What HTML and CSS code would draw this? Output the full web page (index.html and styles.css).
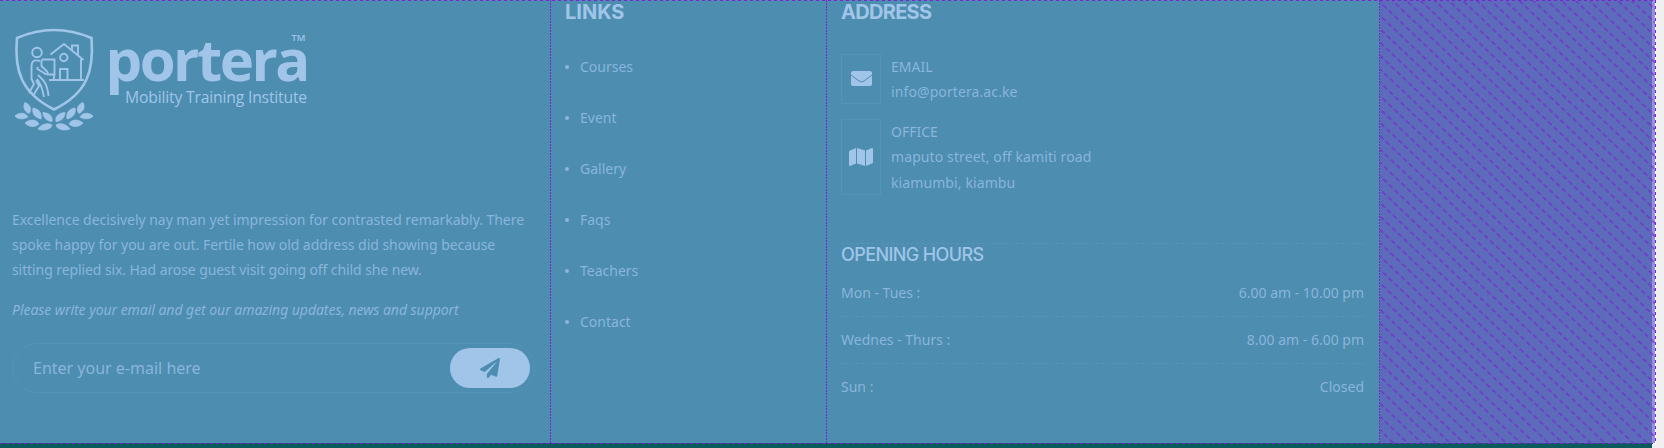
FILE: index.html
```html
<!DOCTYPE html>
<html lang="en">
<head>
<meta charset="utf-8">
<title>Portera Mobility Training Institute</title>
<link rel="stylesheet" href="styles.css">
</head>
<body>
<footer class="footer">
  <div class="grid">
    <section class="about">
      <svg class="logo" width="340" height="150" viewBox="0 0 340 150">
        <g fill="none" stroke="#a0c5e9" stroke-width="2.600">
          <path d="M17 38Q54 22 91.500 38C94 70 88 93 54 109.500C21 93 14 70 17 38Z"/>
          <g stroke-width="1.900">
            <circle cx="37" cy="52.500" r="4.800"/>
            <circle cx="63.800" cy="57.500" r="3.700"/>
            <path d="M50.500 54.500 64 44 83.500 60M72 50V45.500H78V55M81 59V80M49 80H84M60 80V69H67.500V80M41.500 59.500H54.500V74.500H47M54 74V79M41.500 60V66L47 71.500C49 73 46 75 44 73L37.500 69V67M40 61C33 59 31.500 62 31.500 67V79L34 84 29 93M36 80 39 86 33 96M38 75C43 80 47 82 48.500 96M37 79C42 85 42 89 44 97"/>
          </g>
        </g>
        <g fill="#a0c5e9">
          <g id="leaves" stroke="#a0c5e9" stroke-width=".8" stroke-linejoin="round">
            <path d="M25 102.500C31 105 32 110 29 113.500C23.500 111 23 106 25 102.500ZM15 116C20 111.500 26 113 28 117C23 120 17 119 15 116ZM33 108C40 109 42 114 41 119C34 117 32 113 33 108ZM25 123C31 118 37 120 39 124C34 128 29 127 25 123ZM43 112.500C50 113 53 117 52 121.500C46 121 43 117 43 112.500ZM38 129C42 123 49 123 52 125C51 130 43 131 38 129Z"/>
          </g>
          <use href="#leaves" transform="translate(108 0) scale(-1 1)"/>
          <text class="brand" x="105.500" y="80.500">portera</text>
          <text class="tagline" x="125" y="103" textLength="182" lengthAdjust="spacingAndGlyphs">Mobility Training Institute</text>
          <text class="tm" x="291.500" y="41" textLength="14" lengthAdjust="spacingAndGlyphs">TM</text>
        </g>
      </svg>
      <p class="blurb">Excellence decisively nay man yet impression for contrasted remarkably. There<br>spoke happy for you are out. Fertile how old address did showing because<br><span class="tight">sitting replied six. Had arose guest visit going off child she new.</span></p>
      <p class="note">Please write your email and get our amazing updates, news and support</p>
      <div class="subscribe">
        <span class="field">Enter your e-mail here</span>
        <span class="send"><svg width="20" height="20" viewBox="0 0 512 512"><path fill="#4c8db0" d="M476 3 12 271c-18 10-16 36 2 43l107 45L409 106c6-5 13 3 9 8L176 408v80c0 24 29 33 43 16l64-77 124 52c14 6 31-3 33-19L511 28c3-20-19-35-35-25z"/></svg></span>
      </div>
    </section>
    <section class="links">
      <h4 class="title title-links">LINKS</h4>
      <ul class="list"><li>Courses</li><li>Event</li><li>Gallery</li><li>Faqs</li><li>Teachers</li><li>Contact</li></ul>
    </section>
    <section class="address">
      <h4 class="title title-address">ADDRESS</h4>
      <div class="contact email">
        <span class="box"><svg width="21" height="15" viewBox="0 0 21 15"><path fill="#a0c5e9" d="M2 0H19Q21 0 21 2V13Q21 15 19 15H2Q0 15 0 13V2Q0 0 2 0Z"/><path fill="none" stroke="#4c8db0" d="M0 4 8 10Q10.500 12 13 10L21 4"/></svg></span>
        <p>EMAIL<br><span class="wide">info@portera.ac.ke</span></p>
      </div>
      <div class="contact office">
        <span class="box"><svg width="24" height="18" viewBox="0 0 24 18"><path fill="#a0c5e9" d="M0 4Q0 3 1 2.500L7 0V15.500L1 18Q0 18 0 17ZM8 0 16 2.500V18L8 15.500ZM17 2.500 23 0Q24 0 24 1V14Q24 15 23 15.500L17 18Z"/></svg></span>
        <div><p>OFFICE<br><span class="wide">maputo street, off kamiti road</span></p><p class="town wide">kiamumbi, kiambu</p></div>
      </div>
      <div class="hours">
        <svg class="rule" width="523" height="1"><path d="M0 .5H523"/></svg>
        <h5 class="subtitle">OPENING HOURS</h5>
        <div class="row first"><span>Mon - Tues :</span><span>6.00 am - 10.00 pm</span></div>
        <svg class="rule" width="523" height="1"><path d="M0 .5H523"/></svg>
        <div class="row"><span>Wednes - Thurs :</span><span>8.00 am - 6.00 pm</span></div>
        <svg class="rule" width="523" height="1"><path d="M0 .5H523"/></svg>
        <div class="row"><span>Sun :</span><span>Closed</span></div>
      </div>
    </section>
    <div class="free"></div>
    <div class="edge"></div>
  </div>
  <div class="bottom"></div>
  <svg class="guides" width="1664" height="448">
    <defs>
      <pattern id="hatch" width="8" height="9.700" patternUnits="userSpaceOnUse" patternTransform="translate(1384.700 6.700) rotate(43.500) translate(-4 -4.850)">
        <path d="M1.500 4.850H6.500" stroke="#7628d0" stroke-width="1.300"/>
      </pattern>
    </defs>
    <rect x="1380" y="1" width="275" height="442" fill="url(#hatch)"/>
    <path d="M1655.500 0V444" stroke="#fff"/>
    <g stroke="#7b24d4">
      <path stroke-dasharray="3 3" d="M0 .5H1655M0 443.500H1655M1655.500 0V444"/>
      <path stroke-dasharray="2 1" d="M550.500 0V443M826.500 0V443M1379.500 0V443"/>
    </g>
  </svg>
</footer>
</body>
</html>
```
FILE: styles.css
```css
body { margin: 0; background: #f0f0f0; font-family: "Noto Sans", sans-serif; font-size: 14px; line-height: 25px; color: #8ab5dc; }
p, h4, h5, ul { margin: 0; padding: 0; }
.footer { position: relative; width: 1664px; height: 448px; overflow: hidden; }
.grid { display: grid; grid-template-columns: 551px 276px 553px 272px 4px; height: 443px; background: #4c8db0; width: 1656px; }
.about { padding-left: 12px; }
.logo { display: block; margin-left: -12px; }
.brand { font: 700 58px "Open Sans", sans-serif; letter-spacing: -2.5px; }
.tagline { font: 16px "Open Sans", sans-serif; letter-spacing: -0.2px; }
.tm { font: 600 9.5px "Open Sans", sans-serif; }
.blurb { margin-top: 57px; white-space: nowrap; letter-spacing: -0.04px; }
.tight { letter-spacing: -0.09px; }
.note { margin-top: 15px; font-style: italic; white-space: nowrap; letter-spacing: -0.045px; }
.subscribe { box-sizing: border-box; display: flex; justify-content: space-between; align-items: center; width: 523px; height: 50px; margin-top: 21px; border: 1px solid #5494b6; border-radius: 25px; padding: 0 4px 0 20px; }
.field { font-size: 16px; }
.send { display: flex; align-items: center; justify-content: center; width: 80px; height: 40px; border-radius: 20px; background: #a0c5e9; }
.links { padding-left: 14px; }
.title { font: 700 20px/24px Inter, sans-serif; color: #a0c5e9; white-space: nowrap; }
.title-address { letter-spacing: -0.7px; }
.list { list-style: none; margin-top: 17px; }
.list li { display: flex; align-items: center; gap: 11px; height: 51px; }
.list li::before { content: ""; width: 4px; height: 4px; border-radius: 50%; background: #8ab5dc; }
.address { padding-left: 14px; }
.contact { display: flex; gap: 10px; }
.email { margin-top: 30px; height: 50px; }
.email .box { padding-bottom: 1px; }
.office { margin-top: 15px; height: 76px; }
.wide { letter-spacing: 0.1px; }
.town { padding-top: 1px; }
.box { box-sizing: border-box; display: flex; align-items: center; justify-content: center; width: 40px; border: 1px solid #5494b6; }
.hours { width: 523px; margin-top: 48px; }
.rule { display: block; fill: none; stroke: #5695b7; stroke-dasharray: 3 2; }
.subtitle { font: 450 18px/22px Inter, sans-serif; color: #a0c5e9; letter-spacing: -0.6px; }
.row { box-sizing: border-box; display: flex; justify-content: space-between; align-items: center; height: 46px; padding-bottom: 1px; }
.first { height: 50px; padding: 2px 0 0; }
.free { background: #5c6cba; }
.edge { background: #9590df; }
.bottom { width: 1652px; height: 5px; background: #0a5c5c; }
.guides { position: absolute; left: 0; top: 0; }
```
